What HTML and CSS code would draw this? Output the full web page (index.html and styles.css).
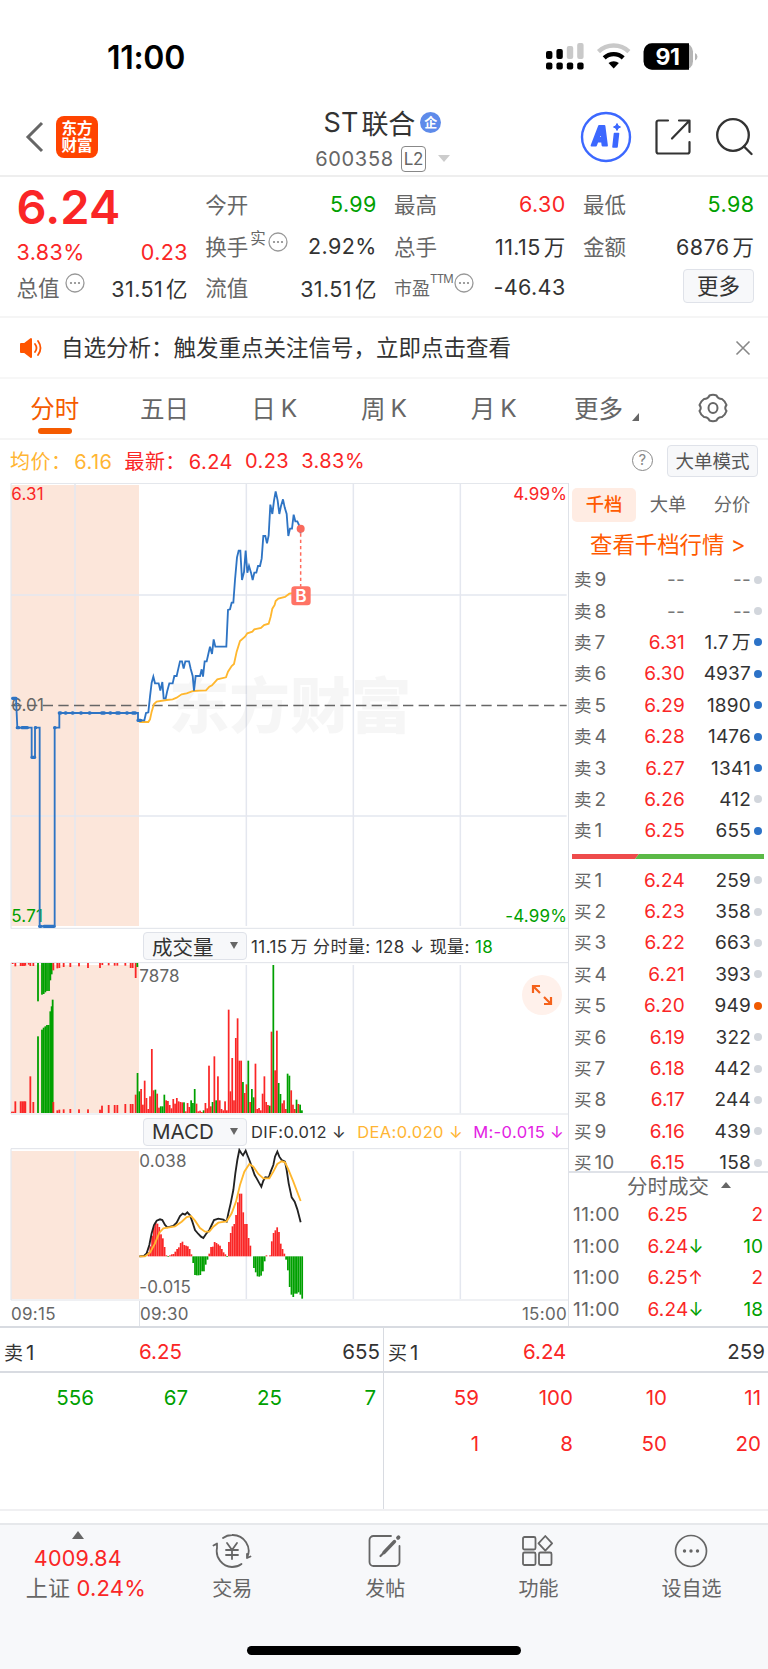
FILE: index.html
```
<!DOCTYPE html>
<html lang="zh-CN">
<head>
  <meta charset="UTF-8">
  <meta name="viewport" content="width=device-width, initial-scale=1">
  <title>ST联合 600358</title>
  <link rel="stylesheet" href="styles.css">
</head>
<body>
  <div class="status">
    <span class="clock">11:00</span>
    <svg class="status-icons" width="156" height="30" viewBox="0 0 156 30">
      <g fill="#000">
        <rect x="1" y="9" width="6.4" height="8" rx="2"/><rect x="11.4" y="7" width="6.4" height="10" rx="2"/>
        <rect x="1" y="20.4" width="6.4" height="7" rx="2"/><rect x="11.4" y="20.4" width="6.4" height="7" rx="2"/>
        <rect x="21.8" y="20.4" width="6.4" height="7" rx="2"/><rect x="32.2" y="20.4" width="6.4" height="7" rx="2"/>
      </g>
      <g fill="#c9c9c9">
        <rect x="21.8" y="4" width="6.4" height="13" rx="2"/><rect x="32.2" y="1" width="6.4" height="16" rx="2"/>
      </g>
      <g fill="none" stroke-width="4.4">
        <path d="M53.5 9.6a22 22 0 0 1 30.4 0" stroke="#c9c9c9"/>
        <path d="M59.2 15.8a14 14 0 0 1 19 0" stroke="#000"/>
      </g>
      <path d="M68.7 26.4l-5.2-5.3a8 8 0 0 1 10.4 0z"/>
      <rect x="98.6" y="1.2" width="49.4" height="26.6" rx="8.4" fill="#b5b5b5"/>
      <path d="M107 1.2h37v26.6H107a8.4 8.4 0 0 1-8.4-8.4V9.6a8.4 8.4 0 0 1 8.4-8.4z"/>
      <path d="M150 11a4 4 0 0 1 0 7.4z" fill="#b5b5b5"/>
      <text x="122.5" y="22.6" class="batt">91</text>
    </svg>
  </div>

  <header class="header">
    <svg class="back" width="20" height="32" viewBox="0 0 20 32"><path d="M17 2L3 16l14 14" fill="none" stroke="#666" stroke-width="3"/></svg>
    <div class="logo">东方<br>财富</div>
    <div class="title">
      <div class="name">ST<span>联合</span><em>企</em></div>
      <div class="code">600358<span class="l2">L2</span><i class="down"></i></div>
    </div>
    <svg width="52" height="52" viewBox="0 0 52 52">
      <circle cx="26" cy="26" r="24" fill="none" stroke="#3c68ff" stroke-width="2.4"/>
      <g fill="#3c68ff" stroke="#3c68ff" stroke-linejoin="round">
        <path d="M19 15h5.5l2.5 19.500h-4.500l-.5-4h-4.500L16 34.500h-4.500zM21.500 20l-2.700 7h3.200z" fill-rule="evenodd" stroke-width="1.8"/>
        <path d="M34.500 22.500h4l-1.500 13.500h-4z" stroke-width="1.6"/>
        <path d="M37 12.500l1.200 2.300 2.300 1.200-2.300 1.200-1.200 2.300-1.200-2.300-2.300-1.200 2.300-1.200z"/>
      </g>
    </svg>
    <svg width="36" height="36" viewBox="0 0 36 36" fill="none" stroke="#333" stroke-width="2.2" stroke-linecap="round" stroke-linejoin="round">
      <path d="M13 1.5H3.5a2 2 0 0 0-2 2v29a2 2 0 0 0 2 2h29a2 2 0 0 0 2-2V23M24 1.5h10.5V13M34 2L17 19.5"/>
    </svg>
    <svg width="38" height="38" viewBox="0 0 38 38" fill="none" stroke="#333" stroke-width="2.3" stroke-linecap="round">
      <circle cx="18" cy="17" r="15.8"/><path d="M29 28.5l7.5 7.5"/>
    </svg>
  </header>

  <section class="quote">
    <div class="price red">6.24</div>
    <div class="item"><label>今开</label><b class="green">5.99</b></div>
    <div class="item"><label>最高</label><b class="red">6.30</b></div>
    <div class="item"><label>最低</label><b class="green">5.98</b></div>
    <div class="item change red"><b>3.83%</b><b>0.23</b></div>
    <div class="item"><label>换手<sup>实</sup><svg class="dots"><use href="#more"/></svg></label><b>2.92%</b></div>
    <div class="item"><label>总手</label><b>11.15<u>万</u></b></div>
    <div class="item"><label>金额</label><b>6876<u>万</u></b></div>
    <div class="item"><label>总值<svg class="dots gap"><use href="#more"/></svg></label><b>31.51<u>亿</u></b></div>
    <div class="item"><label>流值</label><b>31.51<u>亿</u></b></div>
    <div class="item"><label class="pe">市盈<sup>TTM</sup><svg class="dots"><use href="#more"/></svg></label><b>-46.43</b></div>
    <div class="item end"><button class="more-btn">更多</button></div>
  </section>

  <section class="notice">
    <svg width="24" height="22" viewBox="0 0 24 22">
      <path d="M2 7h3.500l6.500-5v18l-6.500-5H2z" fill="#ff5500" stroke="#ff5500" stroke-width="2" stroke-linejoin="round"/>
      <path d="M16 7q3 4 0 8M19 4q5 7 0 14" fill="none" stroke="#ff5500" stroke-width="1.8" stroke-linecap="round"/>
    </svg>
    <p>自选分析：触发重点关注信号，立即点击查看</p>
    <svg width="16" height="16" viewBox="0 0 16 16"><path d="M1.5 1.5l13 13M14.5 1.5l-13 13" stroke="#888" stroke-width="1.6"/></svg>
  </section>

  <nav class="tabs">
    <a class="active">分时</a><a>五日</a><a>日<s>K</s></a><a>周<s>K</s></a><a>月<s>K</s></a>
    <a class="has-more">更多<i></i></a>
    <a><svg width="30" height="30" viewBox="0 0 30 30" fill="none" stroke="#666" stroke-width="2" stroke-linejoin="round">
      <path d="M11.5 2.5Q15 1 18.5 2.5Q20 6 24 6Q27.5 8.500 28.500 12Q26 15 28.500 18Q27.500 21.500 24 24Q20 24 18.500 27.500Q15 29 11.500 27.500Q10 24 6 24Q2.500 21.500 1.500 18Q4 15 1.500 12Q2.500 8.500 6 6Q10 6 11.500 2.500z"/>
      <ellipse cx="15" cy="15" rx="4.5" ry="5"/>
    </svg></a>
  </nav>

  <div class="info">
    <span class="avg">均价：<s>6.16</s></span><span class="red">最新：<s>6.24</s></span><span class="red">0.23</span><span class="red">3.83%</span>
    <i class="help">?</i><button class="mode">大单模式</button>
  </div>

  <main class="main">
    <div class="charts">
      <!-- chart coordinates are in thirds of a pixel -->
      <svg class="chart" width="568" height="446" viewBox="0 39 1704 1338">
        <rect class="pre" x="34" y="45" width="383" height="1323"/>
        <path class="grid" d="M34 375H1700M34 1038H1700M225 42V1368M739 42V1368M1060 42V1368M1381 42V1368"/>
        <path class="frame" d="M33 40H1704M33 40V1376M33 1375H1704"/>
        <text class="mark" x="506" y="774">东方财富</text>
        <path class="mid" d="M34 706.5H1700"/>
        <text x="34" y="91" class="fred">6.31</text>
        <text x="1701" y="91" class="fred end">4.99%</text>
        <text x="34" y="722">6.01</text>
        <text x="34" y="1356" class="fgreen">5.71</text>
        <text x="1701" y="1356" class="fgreen end">-4.99%</text>
        <polyline class="avg-line" points="414,751 420,756 445,756 450,748 455,725 462,702 470,695 500,690 518,688 530,683 545,673 560,670 580,663 600,662 618,661 628,650 636,646 652,628 678,622 684,605 695,588 702,582 710,545 720,513 735,500 742,490 757,485 763,478 783,474 792,465 806,461 812,440 817,416 824,405 827,393 835,386 855,381 868,371 885,369 902,367"/>
        <polyline class="price-line" points="38,685 48,685 52,773 95,773 95,862 105,862 105,773 119,773 119,1369 164,1369 164,773 178,773 178,729 414,729 414,751 433,751 438,729 445,727 450,680 455,638 460,620 465,640 476,640 481,662 487,636 491,685 497,685 502,662 508,640 518,640 523,618 530,618 535,596 540,574 546,574 551,596 556,574 567,574 572,596 578,618 582,662 587,618 600,618 605,598 609,620 614,574 620,574 625,552 630,530 636,552 641,508 646,530 679,530 684,420 690,418 695,398 700,398 705,330 711,262 716,242 721,242 726,330 732,306 737,242 742,308 747,288 753,308 758,330 763,308 769,308 774,288 780,288 785,266 790,198 796,198 801,220 806,196 811,104 817,132 822,92 827,64 833,92 838,132 843,108 849,88 854,112 860,132 865,198 870,176 876,176 881,134 886,154 892,154 897,165 902,190"/>
        <path class="beads" d="M38 685h10M52 773h4M66 773h16M96 862h8M106 773h1M119 1369h4M132 1369h30M164 773h1M178 729h4M196 729h2M217 729h2M242 729h2M268 729h2M305 729h8M330 729h2M350 729h8M380 729h2M398 729h8M414 751h8"/>
        <path d="M902 190V350" stroke="#ff6b5c" stroke-width="4.5" stroke-dasharray="10 9"/>
        <circle cx="902" cy="176" r="12" fill="#f9695c"/>
        <rect x="874" y="349" width="58" height="57" rx="10" fill="#ff7365"/>
        <text x="903" y="397" class="buy">B</text>
      </svg>

      <div class="bar">
        <button class="select">成交量<i></i></button>
        <span>11.15<u>万</u> 分时量: 128 ↓ 现量: <span class="green">18</span></span>
      </div>
      <div class="volume">
        <svg class="chart" width="568" height="153" viewBox="0 126 1704 459">
          <rect class="pre" x="34" y="135" width="383" height="444"/>
          <path class="grid" d="M225 135V580M739 135V580M1060 135V580M1381 135V580"/>
          <path class="frame" d="M33 128H1704M33 128V582M33 582H1704"/>
          <g id="vol"></g>
          <text x="418" y="185">7878</text>
        </svg>
        <div class="expand"><svg width="22" height="22" viewBox="0 0 22 22" fill="none" stroke="#f5621b" stroke-width="2.2"><path d="M2 9V2h7M2.5 2.5L9 9M20 13v7h-7M19.5 19.5L13 13"/></svg></div>
      </div>

      <div class="bar macd-bar">
        <button class="select">MACD<i></i></button>
        <span>DIF:0.012 ↓</span><span class="avg">DEA:0.020 ↓</span><span class="purple">M:-0.015 ↓</span>
      </div>
      <svg class="chart" width="568" height="153" viewBox="0 114 1704 459">
        <rect class="pre" x="34" y="123" width="383" height="444"/>
        <path class="grid" d="M225 123V567M739 123V567M1060 123V567M1381 123V567"/>
        <path class="frame" d="M33 116H1704M33 116V570M33 570H1704"/>
        <g id="macd"></g>
        <polyline class="dif" points="418,439 432,438 440,430 448,405 455,370 462,345 470,332 480,328 487,330 495,345 502,352 520,348 530,338 540,318 548,311 555,314 562,307 570,316 577,335 585,360 595,372 603,380 610,384 618,372 628,360 635,345 642,330 655,326 670,329 680,335 685,310 692,280 700,240 706,190 712,150 718,120 724,130 729,136 737,122 742,135 748,150 756,172 764,195 770,205 777,218 784,230 790,212 796,202 806,203 812,185 820,165 825,140 832,125 838,140 845,150 855,155 860,180 866,220 875,262 884,275 892,298 902,337"/>
        <polyline class="avg-line" points="418,439 435,439 450,428 465,400 478,368 490,355 525,349 545,335 560,321 573,318 585,332 600,354 615,365 628,365 640,350 655,338 680,334 695,310 708,275 720,225 733,185 748,162 760,170 775,192 790,205 808,205 820,185 832,162 845,154 855,157 865,178 880,215 902,273"/>
        <text x="418" y="172">0.038</text>
        <text x="418" y="548">-0.015</text>
      </svg>
      <div class="axis"><span>09:15</span><span class="open">09:30</span><span>15:00</span></div>
    </div>

    <aside class="book">
      <div class="book-tabs"><a class="active">千档</a><a>大单</a><a>分价</a></div>
      <div class="book-link">查看千档行情 &gt;</div>
      <div id="sell"></div>
      <svg class="ratio" width="192" height="5" viewBox="0 0 192 5"><path d="M0 0h67l-4 5H0z" fill="#ee4b4b"/><path d="M67 0h125v5H63z" fill="#5bb947"/></svg>
      <div id="buy"></div>
      <div class="ticks-head">分时成交<i></i></div>
      <div class="tick"><span>11:00</span><b>6.25</b><em class="red">2</em></div>
      <div class="tick"><span>11:00</span><b>6.24<i class="green">↓</i></b><em class="green">10</em></div>
      <div class="tick"><span>11:00</span><b>6.25<i>↑</i></b><em class="red">2</em></div>
      <div class="tick"><span>11:00</span><b>6.24<i class="green">↓</i></b><em class="green">18</em></div>
    </aside>
  </main>

  <section class="queue">
    <div class="side">
      <div class="queue-head"><span>卖<s>1</s></span><b>6.25</b><em>655</em></div>
      <div class="cells green"><span>556</span><span>67</span><span>25</span><span>7</span></div>
    </div>
    <div class="side">
      <div class="queue-head"><span>买<s>1</s></span><b>6.24</b><em>259</em></div>
      <div class="cells red"><span>59</span><span>100</span><span>10</span><span>11</span><span>1</span><span>8</span><span>50</span><span>20</span></div>
    </div>
  </section>

  <footer class="toolbar">
    <div class="index"><i></i><b class="red">4009.84</b><p>上证 <span class="red">0.24%</span></p></div>
    <div class="tool">
      <svg width="40" height="36" viewBox="0 0 40 36" fill="none" stroke="#666" stroke-width="1.8" stroke-linecap="round" stroke-linejoin="round">
        <path d="M11 5Q15 2 20 2a16 16 0 0 1 15 23l3.5-1.500M35 25V21M1.500 12.500L5 10.500V15A16 16 0 0 0 20 34q5.500 0 9.500-3"/>
        <path d="M15 10l5 7 5-7M14 17h12M14 22h12M20 17v9"/>
      </svg>
      <span>交易</span>
    </div>
    <div class="tool">
      <svg width="36" height="36" viewBox="0 0 36 36" fill="none" stroke="#666" stroke-width="1.8" stroke-linecap="round">
        <path d="M24 3H6.5A4 4 0 0 0 2.5 7v22a4 4 0 0 0 4 4h22a4 4 0 0 0 4-4V13"/>
        <path d="M27.5 8.5L17 19.5" stroke-width="3.4"/><path d="M18 18.5l-4.500 4.500" stroke-width="2.2"/><path d="M31 4.8l.5-.5" stroke-width="3.8"/>
      </svg>
      <span>发帖</span>
    </div>
    <div class="tool">
      <svg width="36" height="36" viewBox="0 0 36 36" fill="none" stroke="#666" stroke-width="1.8" stroke-linejoin="round">
        <rect x="3" y="4" width="12.5" height="12.5" rx="1.5"/><rect x="3" y="19.5" width="12.5" height="12.5" rx="1.5"/><rect x="19" y="19.5" width="12.5" height="12.5" rx="1.5"/>
        <path d="M25.3 3l6.8 7.3-6.8 7.3-6.8-7.3z"/>
      </svg>
      <span>功能</span>
    </div>
    <div class="tool">
      <svg width="36" height="36" viewBox="0 0 36 36"><circle cx="18" cy="18" r="15.5" fill="none" stroke="#666" stroke-width="1.7"/><g fill="#666"><circle cx="11.5" cy="18" r="1.7"/><circle cx="18" cy="18" r="1.7"/><circle cx="24.5" cy="18" r="1.7"/></g></svg>
      <span>设自选</span>
    </div>
  </footer>
  <div class="home"><i></i></div>

  <svg width="0" height="0" class="defs">
    <symbol id="more" viewBox="0 0 20 20"><circle cx="10" cy="10" r="9" fill="none" stroke="#999" stroke-width="1.3"/><g fill="#888"><circle cx="6" cy="10" r="1.1"/><circle cx="10" cy="10" r="1.1"/><circle cx="14" cy="10" r="1.1"/></g></symbol>
  </svg>

  <script>
    const RED = '#fa2626';
    const GREEN = '#00a000';

    // order book: level, price, volume, dot
    const sell = [
      [9, '--', '--', ''], [8, '--', '--', ''], [7, '6.31', '1.7<u>万</u>', 'blue'],
      [6, '6.30', '4937', 'blue'], [5, '6.29', '1890', 'blue'], [4, '6.28', '1476', 'blue'],
      [3, '6.27', '1341', 'blue'], [2, '6.26', '412', ''], [1, '6.25', '655', 'blue']
    ];
    const buy = [
      [1, '6.24', '259', ''], [2, '6.23', '358', ''], [3, '6.22', '663', ''], [4, '6.21', '393', ''],
      [5, '6.20', '949', 'orange'], [6, '6.19', '322', ''], [7, '6.18', '442', ''], [8, '6.17', '244', ''],
      [9, '6.16', '439', ''], [10, '6.15', '158', '']
    ];

    function renderBook(id, name, rows) {
      document.getElementById(id).innerHTML = rows.map(([n, price, vol, dot]) =>
        `<div class="level${price === '--' ? ' empty' : ''}"><span>${name}<s>${n}</s></span><b>${price}</b><em>${vol}</em><i class="${dot}"></i></div>`
      ).join('');
    }
    renderBook('sell', '卖', sell);
    renderBook('buy', '买', buy);

    function rect(x, y, w, h, color) {
      return `<rect x="${x.toFixed(1)}" y="${y}" width="${w}" height="${h}" fill="${color}"/>`;
    }

    // positive = red bar, negative = green bar
    const volume = [-120, -65, 72, 25, 97, 45, 12, 50, 192, 68, -70, 58, 16, -20, -20, -55, 38, 36, 24, 14,
      42, 28, 45, 35, 33, 32, -32, 5, 30, 18, -38, -30, -72, 28, 5, 7, 3, -8, 30, 14,
      142, 20, -33, 170, -38, 110, 38, 12, 8, 35, 8, 310, 65, 165, 38, 225, 284, 157, 157, -93,
      60, 86, -157, 33, -72, -47, 148, 12, 15, 8, 58, 110, 33, 24, -22, 244, -444, 128, 247, -90,
      -57, 29, 38, 12, -118, -112, 68, 25, 12, -40, 27, -25, -8];
    const auction = [[36, 4], [41, 4], [46, 35], [62, 35], [67, 35], [72, 35], [76, 35], [91, 110], [100, 33],
      [114, -230], [126, -250], [131, -256], [136, -260], [141, -264], [146, -264], [151, -305], [155, -320], [158, -340],
      [160, 33], [172, 8], [178, 10], [191, 11], [211, 12], [237, 11], [264, 11], [300, 10], [306, 22],
      [326, 24], [344, 24], [352, 24], [376, 27], [392, 27], [398, 27], [407, 55]];
    const unmatched = [[38, 3], [46, 10], [62, 9], [67, 9], [72, 9], [76, 8], [86, 5], [91, 9], [100, 9],
      [114, -115], [126, -95], [131, -93], [136, -88], [141, -84], [147, -84], [151, -52], [155, -34],
      [160, 22], [172, 16], [178, 15], [191, 12], [211, 12], [237, 10], [264, 15], [300, 15], [307, 6],
      [326, 7], [344, 8], [352, 8], [376, 8], [392, 15], [398, 15], [407, 45], [412, -12]];
    let vol = '';
    auction.forEach(([x, v]) => { vol += rect(x - 2.7, 579 - Math.abs(v), 5.4, Math.abs(v), v > 0 ? RED : GREEN); });
    unmatched.forEach(([x, v]) => { vol += rect(x - 2.7, 129, 5.4, Math.abs(v), v > 0 ? RED : GREEN); });
    volume.forEach((v, i) => { vol += rect(410 + i * 5.36, 579 - Math.abs(v), 5.2, Math.abs(v), v > 0 ? RED : GREEN); });
    document.getElementById('vol').innerHTML = vol;

    const macd = [12, 30, 62, 90, 102, 98, 88, 66, 54, 28, 3, -2, 3, 6, 7, 14, 22, 27, 40, 44,
      34, 32, 30, 22, 6, -20, -56, -57, -57, -56, -45, -45, -25, -10, 8, 28, 29, 43, 40, 36,
      32, 22, 12, 6, -2, 43, 70, 90, 97, 124, 162, 188, 188, 132, 97, 97, 55, 32, 0, -35,
      -48, -60, -61, -58, -45, -15, 3, 0, 3, 45, 70, 78, 87, 73, 38, 22, 8, -10, -42, -92,
      -115, -122, -112, -112, -108, -115, -127];
    document.getElementById('macd').innerHTML = macd.map((v, i) =>
      rect(443 + i * 5.36, v > 0 ? 439 - v : 439, 5.2, Math.abs(v), v > 0 ? RED : GREEN)).join('');
  </script>
</body>
</html>
```
FILE: styles.css
```
* { box-sizing: border-box; }
body { margin: 0; width: 768px; height: 1669px; overflow: hidden; background: #fff; color: #333; font-family: Inter, "Noto Sans CJK SC", sans-serif; font-size: 20px; }
b, em, i, u, s { font-weight: normal; font-style: normal; text-decoration: none; }
u { margin-left: 3px; }
s { margin-left: 3px; }
p { margin: 0; }
button { font-family: inherit; color: #333; background: #f7f8fa; border: 1px solid #dfe2e9; border-radius: 4px; padding: 0; }
svg { display: block; flex: none; }
.defs { display: none; }
.red { color: #fa2626; }
.green { color: #00a000; }
.avg { color: #ffb533; }
.purple { color: #e321e3; }

.status { height: 96px; padding: 42px 67px 0 107px; display: flex; justify-content: space-between; }
.clock { font-size: 32px; font-weight: 600; line-height: 32px; color: #000; letter-spacing: -0.3px; }
.batt { font: 700 23px Inter; fill: #fff; text-anchor: middle; letter-spacing: -0.5px; }

.header { height: 81px; padding: 2px 15px 0 25px; display: flex; align-items: center; border-bottom: 2px solid #eee; }
.logo { width: 42px; height: 42px; margin-left: 11px; padding-top: 4px; border-radius: 8px; background: #ff4400; color: #fff; font-size: 15.5px; font-weight: 700; line-height: 17px; text-align: center; }
.title { flex: 1; padding-left: 117px; padding-right: 30px; text-align: center; }
.name { display: flex; justify-content: center; align-items: center; height: 42px; margin-top: 2px; font-size: 27px; }
.name span { margin-left: 3px; }
.name em { width: 21px; height: 21px; margin-left: 5px; border-radius: 50%; background: #5e8bea; color: #fff; font-size: 13px; font-weight: 700; line-height: 20px; }
.code { display: flex; justify-content: center; align-items: center; height: 31px; color: #666; font-size: 20px; letter-spacing: 0.7px; }
.l2 { width: 25px; height: 26px; margin-left: 7px; border: 1px solid #888; border-radius: 4px; font-size: 17px; line-height: 25px; letter-spacing: -0.5px; }
.down { margin-left: 12px; border: 6px solid transparent; border-top: 7px solid #ccc; border-bottom: 0; }
.header > svg:nth-of-type(2) { margin-right: 23px; }
.header > svg:nth-of-type(3) { margin-right: 24px; }

.quote { height: 141px; padding: 6px 14px 0 16.5px; display: grid; grid-template-columns: repeat(4, 171px); grid-template-rows: 42px 41px 42px; column-gap: 17.8px; border-bottom: 2px solid #f5f5f5; }
.price { font-size: 47px; font-weight: 600; line-height: 48px; letter-spacing: 0.1px; }
.item { display: flex; justify-content: space-between; align-items: center; }
.item b { font-size: 21.5px; letter-spacing: 0.4px; white-space: nowrap; margin-right: -0.5px; }
.item label { display: flex; align-items: center; color: #666; font-size: 21.5px; white-space: nowrap; margin-top: -1px; }
.change { padding-top: 13px; }
.item sup { font-size: 15.5px; line-height: 16px; margin-top: -12px; margin-left: 2px; vertical-align: baseline; }
.dots { width: 20px; height: 20px; margin: -7px 0 0 2px; }
.dots.gap { margin-left: 5px; }
.item .pe { font-size: 18px; }
.pe sup { font-size: 11.5px; letter-spacing: -0.8px; margin-left: 0; margin-top: -16px; }
.pe .dots { margin-left: 1px; }
.item.end { justify-content: flex-end; }
.more-btn { width: 71px; height: 34px; margin-top: -3px; font-size: 21.5px; line-height: 30px; }

.notice { height: 61px; padding: 0 17px 0 19px; display: flex; align-items: center; border-bottom: 2px solid #f7f7f7; }
.notice p { flex: 1; margin-left: 18px; margin-top: -3px; font-size: 22.5px; }

.tabs { height: 61px; display: grid; grid-template-columns: repeat(7, 1fr); border-bottom: 2px solid #f5f5f5; }
.tabs a { display: flex; justify-content: center; align-items: center; padding-bottom: 2px; color: #666; font-size: 24.5px; position: relative; }
.tabs s { margin-left: 5px; }
.tabs .active { color: #f55b00; }
.tabs .active::after { content: ""; position: absolute; left: 38px; bottom: 4px; width: 34px; height: 6px; border-radius: 3px; background: #f55b00; }
.has-more i { margin: 18px -6px 0 9px; border-left: 7px solid transparent; border-bottom: 8px solid #666; }

.info { height: 43px; padding: 0 10px 2px; display: flex; align-items: center; font-size: 20px; letter-spacing: 0.45px; }
.info span { margin-right: 12px; }
.help { width: 21px; height: 21px; margin-left: auto; border: 1.5px solid #888; border-radius: 50%; color: #888; font-size: 15px; line-height: 18px; text-align: center; }
.mode { width: 91px; height: 32px; margin-left: 14px; font-size: 18.5px; color: #555; line-height: 28px; }

.main { display: flex; height: 843px; }
.charts { width: 568px; }
.chart text { font: 51px Inter; fill: #666; letter-spacing: 0.5px; }
.chart .end { text-anchor: end; }
.chart .fred { fill: #fa2626; }
.chart .fgreen { fill: #00a000; }
.chart .mark { font: 900 182px "Noto Sans CJK SC"; fill: #000; fill-opacity: 0.035; letter-spacing: 0; }
.chart .buy { font: 600 52px Inter; fill: #fff; text-anchor: middle; }
.pre { fill: #fce6da; }
.grid { stroke: #e4e7ef; stroke-width: 4.5; }
.frame { fill: none; stroke: #dfe2e8; stroke-width: 3; }
.mid { stroke: #666; stroke-width: 5; stroke-dasharray: 31 16; }
.price-line, .avg-line, .dif { fill: none; stroke: #2e74c4; stroke-width: 5.5; }
.avg-line { stroke: #ffb72e; }
.dif { stroke: #222; }
.beads { fill: none; stroke: #2e74c4; stroke-width: 10; stroke-linecap: round; }

.bar { height: 33px; padding-left: 143px; display: flex; align-items: center; font-size: 17px; letter-spacing: 0.4px; white-space: pre; }
.bar > span { margin-left: 4px; }
.bar .avg { margin-left: 11px; }
.bar .purple { margin-left: 10px; }
.macd-bar { font-size: 16.5px; }
.select { width: 104px; height: 28px; padding: 0 8px; display: flex; justify-content: space-between; align-items: center; font-size: 20.5px; }
.select i { border: 4px solid transparent; border-top: 7px solid #666; border-bottom: 0; }
.volume { position: relative; }
.expand { position: absolute; right: 6px; top: 13px; width: 40px; height: 40px; padding: 9px; border-radius: 50%; background: #fff1eb; }
.axis { height: 25px; padding: 0 1px 0 11px; display: flex; font-size: 17px; line-height: 26px; color: #666; letter-spacing: 0.3px; }
.axis span { width: 128px; }
.axis .open { flex: 1; border-left: 1px solid #dfe2e8; }
.axis span:last-child { text-align: right; }

.book { width: 200px; border-left: 1px solid #dfe2e8; }
.book-tabs { height: 43px; padding: 5px 3px 4px; display: flex; align-items: center; }
.book-tabs a { width: 64px; height: 34px; line-height: 33px; text-align: center; border-radius: 5px; color: #666; font-size: 18.3px; }
.book-tabs .active { background: #ffece3; color: #ff5a00; font-weight: 500; }
.book-link { height: 38px; padding-left: 21px; line-height: 38px; color: #ff5a00; font-size: 22.4px; white-space: nowrap; }
.level { height: 31.4px; padding-left: 5px; display: flex; align-items: center; font-size: 19px; line-height: 31px; }
.level span { width: 52px; color: #666; font-size: 17.5px; white-space: nowrap; }
.level s { font-size: 19px; }
.level b { width: 59px; text-align: right; color: #fa2626; letter-spacing: 0.2px; }
.level em { width: 66px; text-align: right; letter-spacing: 0.2px; }
.level i { width: 8px; height: 8px; margin-left: 3px; border-radius: 50%; background: #d2d6dc; }
.level .blue { background: #2c72c7; }
.level .orange { background: #f05a00; }
.empty b, .empty em { color: #777; }
.ratio { margin: 7px 0 6px 3px; }
#buy { height: 308px; overflow: hidden; border-bottom: 2px solid #dfe2e8; }
.ticks-head { height: 26px; padding: 0 0 2px 58px; display: flex; align-items: center; color: #666; font-size: 20.5px; }
.ticks-head i { margin-left: 12px; border: 5px solid transparent; border-bottom: 6px solid #666; border-top: 0; }
.tick { height: 31.7px; padding: 0 5px 0 4px; display: flex; align-items: center; font-size: 19px; }
.tick span { width: 74.5px; color: #666; font-size: 19px; letter-spacing: 0.4px; }
.tick b { color: #fa2626; letter-spacing: 0.2px; }
.tick em { margin-left: auto; }
.tick i { display: inline-block; width: 13px; font-size: 18px; }

.queue { height: 185px; display: flex; border-top: 2px solid #d8dbe1; border-bottom: 2px solid #f0f0f2; }
.side { width: 384px; border-right: 1px solid #d8dbe1; }
.side + .side { border: 0; }
.queue-head { height: 45px; padding: 3px 3px 0 4px; display: flex; align-items: center; border-bottom: 2px solid #d8dbe1; font-size: 20.5px; }
.queue-head span { width: 135px; font-size: 19px; }
.queue-head s { font-size: 20.5px; }
.queue-head b { color: #fa2626; }
.queue-head em { margin-left: auto; }
.cells { padding-right: 7px; display: grid; grid-template-columns: repeat(4, 94px); justify-content: end; grid-auto-rows: 46px; font-size: 20.5px; line-height: 49px; text-align: right; }

.toolbar { height: 98px; margin-top: 12px; padding-top: 8px; display: flex; background: #f7f8fa; border-top: 2px solid #e6e8eb; color: #666; }
.index { width: 156px; display: flex; flex-direction: column; align-items: center; font-size: 22px; letter-spacing: 0.2px; }
.index i { border: 6px solid transparent; border-top: 0; border-bottom: 8px solid #666; margin-top: -2px; }
.index b { height: 34px; line-height: 38px; font-size: 21.5px; }
.index p { margin-left: 16px; line-height: 31px; white-space: nowrap; }
.tool { width: 153.3px; display: flex; flex-direction: column; align-items: center; font-size: 20px; line-height: 40px; }
.home { height: 49px; padding-top: 25px; background: #f7f8fa; }
.home i { display: block; width: 274px; height: 9px; margin: 0 auto; border-radius: 5px; background: #000; }
```
